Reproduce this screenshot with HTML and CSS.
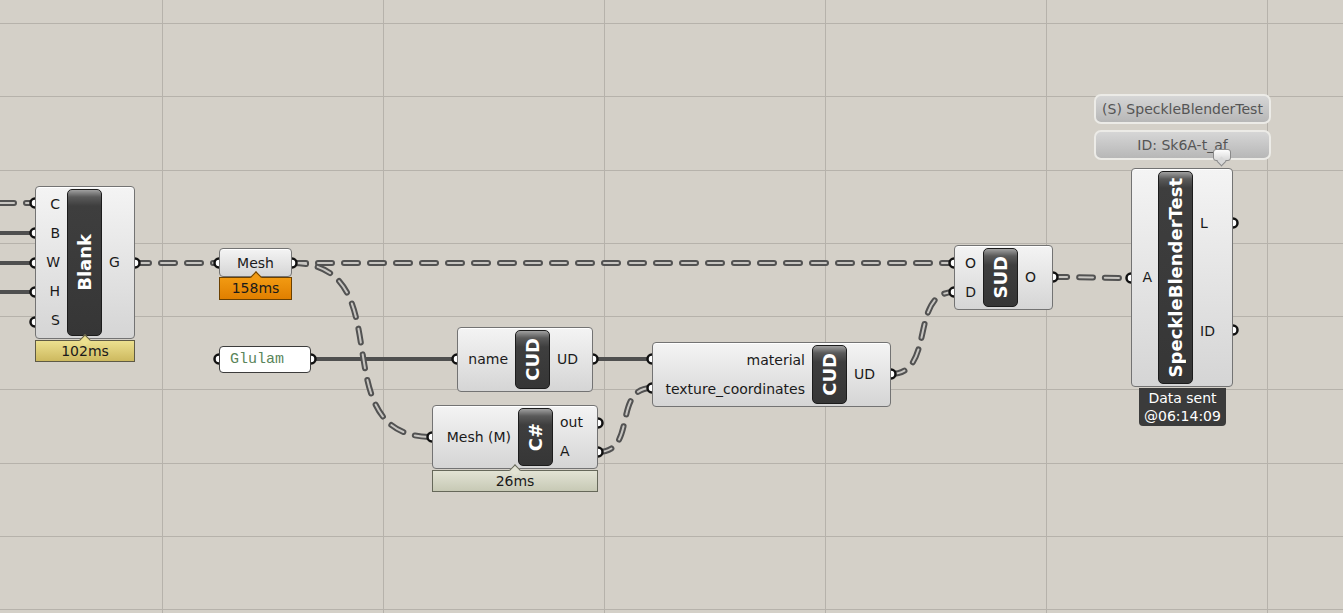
FILE: index.html
```html
<!DOCTYPE html>
<html>
<head>
    <title>Grasshopper canvas</title>
    <link rel="stylesheet" href="styles.css">
</head>
<body>
    <div class="canvas">
        <svg class="wires" width="1343" height="613" viewBox="0 0 1343 613">
            <!-- grid -->
            <g class="grid">
                <path d="M162.5 0V613M383.5 0V613M604.5 0V613M825.5 0V613M1046.5 0V613M1267.5 0V613"/>
                <path d="M0 23.5H1343M0 96.5H1343M0 170.5H1343M0 243.5H1343M0 316.5H1343M0 389.5H1343M0 463.5H1343M0 536.5H1343M0 609.5H1343"/>
            </g>

            <!-- solid wires -->
            <g class="solid">
                <path d="M0 233H35"/>
                <path d="M0 263H35"/>
                <path d="M0 292H35"/>
                <path d="M311 359H457"/>
                <path d="M593 359H652"/>
            </g>

            <!-- dashed (list) wires: outer line, then inner line -->
            <g class="dash-out">
                <path d="M0 203H35"/>
                <path d="M135 263H219"/>
                <path d="M292 263H954"/>
                <path d="M292 263C405 263 319 437 432 437"/>
                <path d="M598 452C638 452 612 388 652 388"/>
                <path d="M891 374C936 374 909 292 954 292"/>
                <path d="M1053 277C1092 277 1092 278 1131 278"/>
            </g>
            <g class="dash-in">
                <path d="M0 203H35"/>
                <path d="M135 263H219"/>
                <path d="M292 263H954"/>
                <path d="M292 263C405 263 319 437 432 437"/>
                <path d="M598 452C638 452 612 388 652 388"/>
                <path d="M891 374C936 374 909 292 954 292"/>
                <path d="M1053 277C1092 277 1092 278 1131 278"/>
            </g>

            <!-- ports -->
            <g class="ports">
                <circle cx="35" cy="203" r="4.5"/>
                <circle cx="35" cy="233" r="4.5"/>
                <circle cx="35" cy="263" r="4.5"/>
                <circle cx="35" cy="292" r="4.5"/>
                <circle cx="35" cy="322" r="4.5"/>
                <circle cx="135" cy="263" r="4.5"/>
                <circle cx="219" cy="263" r="4.5"/>
                <circle cx="292" cy="263" r="4.5"/>
                <circle cx="219" cy="359" r="4.5"/>
                <circle cx="311" cy="359" r="4.5"/>
                <circle cx="457" cy="359" r="4.5"/>
                <circle cx="593" cy="359" r="4.5"/>
                <circle cx="652" cy="359" r="4.5"/>
                <circle cx="652" cy="388" r="4.5"/>
                <circle cx="891" cy="374" r="4.5"/>
                <circle cx="432" cy="437" r="4.5"/>
                <circle cx="598" cy="423" r="4.5"/>
                <circle cx="598" cy="452" r="4.5"/>
                <circle cx="954" cy="263" r="4.5"/>
                <circle cx="954" cy="292" r="4.5"/>
                <circle cx="1053" cy="277" r="4.5"/>
                <circle cx="1131" cy="278" r="4.5"/>
                <circle cx="1233" cy="223" r="4.5"/>
                <circle cx="1233" cy="330" r="4.5"/>
            </g>
        </svg>

        <!-- Blank -->
        <div class="node n-blank">
            <div class="ins"><span>C</span><span>B</span><span>W</span><span>H</span><span>S</span></div>
            <div class="cap"><span>Blank</span></div>
            <div class="outs"><span>G</span></div>
        </div>
        <div class="timer t-yellow t-blank">102ms</div>

        <!-- Mesh param -->
        <div class="node param n-mesh">Mesh</div>
        <div class="timer t-orange t-mesh">158ms</div>

        <!-- Glulam panel -->
        <div class="text-panel n-glulam">Glulam</div>

        <!-- CUD (name) -->
        <div class="node n-cud1">
            <div class="ins"><span>name</span></div>
            <div class="cap"><span>CUD</span></div>
            <div class="outs"><span>UD</span></div>
        </div>

        <!-- C# script -->
        <div class="node n-cs">
            <div class="ins"><span>Mesh (M)</span></div>
            <div class="cap"><span>C#</span></div>
            <div class="outs"><span>out</span><span>A</span></div>
        </div>
        <div class="timer t-green t-cs">26ms</div>

        <!-- CUD (material) -->
        <div class="node n-cud2">
            <div class="ins"><span>material</span><span>texture_coordinates</span></div>
            <div class="cap"><span>CUD</span></div>
            <div class="outs"><span>UD</span></div>
        </div>

        <!-- SUD -->
        <div class="node n-sud">
            <div class="ins"><span>O</span><span>D</span></div>
            <div class="cap"><span>SUD</span></div>
            <div class="outs"><span>O</span></div>
        </div>

        <!-- Speckle sender -->
        <div class="tag tag-name">(S) SpeckleBlenderTest</div>
        <div class="tag tag-id">ID: Sk6A-t_af</div>
        <div class="node n-speckle">
            <div class="ins"><span>A</span></div>
            <div class="cap"><span>SpeckleBlenderTest</span></div>
            <div class="outs spread"><span>L</span><span>ID</span></div>
        </div>
        <div class="bubble"></div>
        <div class="sent">Data sent<br>@06:14:09</div>
    </div>
</body>
</html>
```

FILE: styles.css
```css
body {
    margin: 0;
    background-color: #d4d0c8;
    font-family: "DejaVu Sans", sans-serif;
}
.canvas {
    position: relative;
    width: 1343px;
    height: 613px;
    overflow: hidden;
    background-color: #d4d0c8;
}
.wires {
    position: absolute;
    left: 0;
    top: 0;
}
.grid path {
    stroke: #b6b2ab;
    stroke-width: 1;
    fill: none;
}
.solid path {
    stroke: #4f4f4f;
    stroke-width: 4;
    fill: none;
}
.dash-out path {
    stroke: #525252;
    stroke-width: 6;
    stroke-dasharray: 14 12;
    stroke-linecap: round;
    fill: none;
}
.dash-in path {
    stroke: #c8c6c2;
    stroke-width: 2;
    stroke-dasharray: 14 12;
    stroke-linecap: round;
    fill: none;
}
.ports circle {
    fill: #fff;
    stroke: #111;
    stroke-width: 2.5;
}

/* components */
.node {
    position: absolute;
    box-sizing: border-box;
    display: flex;
    border: 1px solid #737373;
    border-radius: 4px;
    background: linear-gradient(#f4f4f4, #d5d5d5);
    box-shadow: inset 0 1px 0 #fff;
    font-size: 14px;
    color: #1a1a1a;
}
.ins, .outs {
    display: flex;
    flex-direction: column;
    justify-content: center;
    box-sizing: border-box;
}
.ins {
    align-items: flex-end;
    padding-right: 7px;
    flex-shrink: 0;
}
.outs {
    align-items: flex-start;
    padding-left: 7px;
    flex: 1;
}
.outs.spread {
    justify-content: space-around;
}
.ins span, .outs span {
    height: 29px;
    line-height: 29px;
    white-space: nowrap;
}
.cap {
    width: 35px;
    flex-shrink: 0;
    margin: 2px 0;
    box-sizing: border-box;
    border: 1px solid #1c1c1c;
    border-radius: 5px;
    background: linear-gradient(#a0a0a0 0, #5a5a5a 7px, #3e3e3e 16px, #363636 100%);
    display: flex;
    align-items: center;
    justify-content: center;
}
.cap span {
    writing-mode: vertical-rl;
    transform: rotate(180deg);
    color: #fff;
    font-weight: bold;
    font-size: 18px;
    white-space: nowrap;
}
.param {
    align-items: center;
    justify-content: center;
}

.n-blank { left: 35px; top: 186px; width: 100px; height: 153px; }
.n-blank .ins { width: 31px; }
.n-mesh { left: 219px; top: 248px; width: 73px; height: 29px; }
.n-cud1 { left: 457px; top: 327px; width: 136px; height: 65px; }
.n-cud1 .ins { width: 57px; }
.n-cud2 { left: 652px; top: 342px; width: 239px; height: 65px; }
.n-cud2 .ins { width: 159px; }
.n-cs { left: 432px; top: 405px; width: 166px; height: 64px; }
.n-cs .ins { width: 85px; }
.n-sud { left: 954px; top: 245px; width: 99px; height: 65px; }
.n-sud .ins { width: 28px; }
.n-speckle { left: 1131px; top: 168px; width: 102px; height: 219px; }
.n-speckle .ins { width: 26px; padding-right: 6px; }

/* profiler bars */
.timer {
    position: absolute;
    box-sizing: border-box;
    border: 1px solid #5e5a45;
    font-size: 14px;
    color: #1a1a1a;
    text-align: center;
    line-height: 20px;
}
.timer::before {
    content: '';
    position: absolute;
    left: 50%;
    top: -5px;
    width: 7px;
    height: 7px;
    margin-left: -4px;
    border-left: 1px solid #5e5a45;
    border-top: 1px solid #5e5a45;
    transform: rotate(45deg);
}
.t-yellow {
    background: linear-gradient(#ece08f, #cdb95f);
}
.t-yellow::before { background: #ece08f; }
.t-orange {
    background: linear-gradient(#f29a12, #e07f00);
    border-color: #6b4000;
}
.t-orange::before {
    background: #f29a12;
    border-color: #6b4000;
}
.t-green {
    background: linear-gradient(#e2e3d4, #c7c9b5);
    border-color: #66685a;
}
.t-green::before {
    background: #e2e3d4;
    border-color: #66685a;
}
.t-blank { left: 35px; top: 340px; width: 100px; height: 22px; }
.t-mesh { left: 219px; top: 277px; width: 73px; height: 23px; }
.t-cs { left: 432px; top: 470px; width: 166px; height: 22px; }

/* text panel */
.text-panel {
    position: absolute;
    box-sizing: border-box;
    left: 219px;
    top: 346px;
    width: 92px;
    height: 27px;
    display: flex;
    align-items: center;
    padding-left: 10px;
    background: #fff;
    border: 1px solid #3c3c3c;
    border-radius: 4px;
    font-family: "Liberation Mono", monospace;
    font-size: 15px;
    color: #5a855a;
}

/* speckle labels */
.tag {
    position: absolute;
    box-sizing: border-box;
    left: 1094px;
    width: 177px;
    height: 30px;
    border: 2px solid #ecebe7;
    border-radius: 7px;
    background: linear-gradient(#d6d6d6, #b7b7b7);
    color: #555;
    font-size: 14px;
    text-align: center;
    line-height: 26px;
}
.tag-name { top: 94px; }
.tag-id { top: 130px; }
.bubble {
    position: absolute;
    box-sizing: border-box;
    left: 1213px;
    top: 149px;
    width: 18px;
    height: 12px;
    border: 1px solid #8a8a8a;
    border-radius: 3px;
    background: linear-gradient(#fdfdfd, #d8d8d8);
}
.bubble::after {
    content: '';
    position: absolute;
    left: 4px;
    bottom: -5px;
    width: 6px;
    height: 6px;
    background: #d8d8d8;
    border-right: 1px solid #8a8a8a;
    border-bottom: 1px solid #8a8a8a;
    transform: rotate(45deg);
}
.sent {
    position: absolute;
    left: 1139px;
    top: 388px;
    width: 87px;
    height: 38px;
    box-sizing: border-box;
    padding-top: 1px;
    background: #3b3b3b;
    border-radius: 0 0 4px 4px;
    color: #fff;
    font-size: 14px;
    line-height: 18px;
    text-align: center;
}
```
